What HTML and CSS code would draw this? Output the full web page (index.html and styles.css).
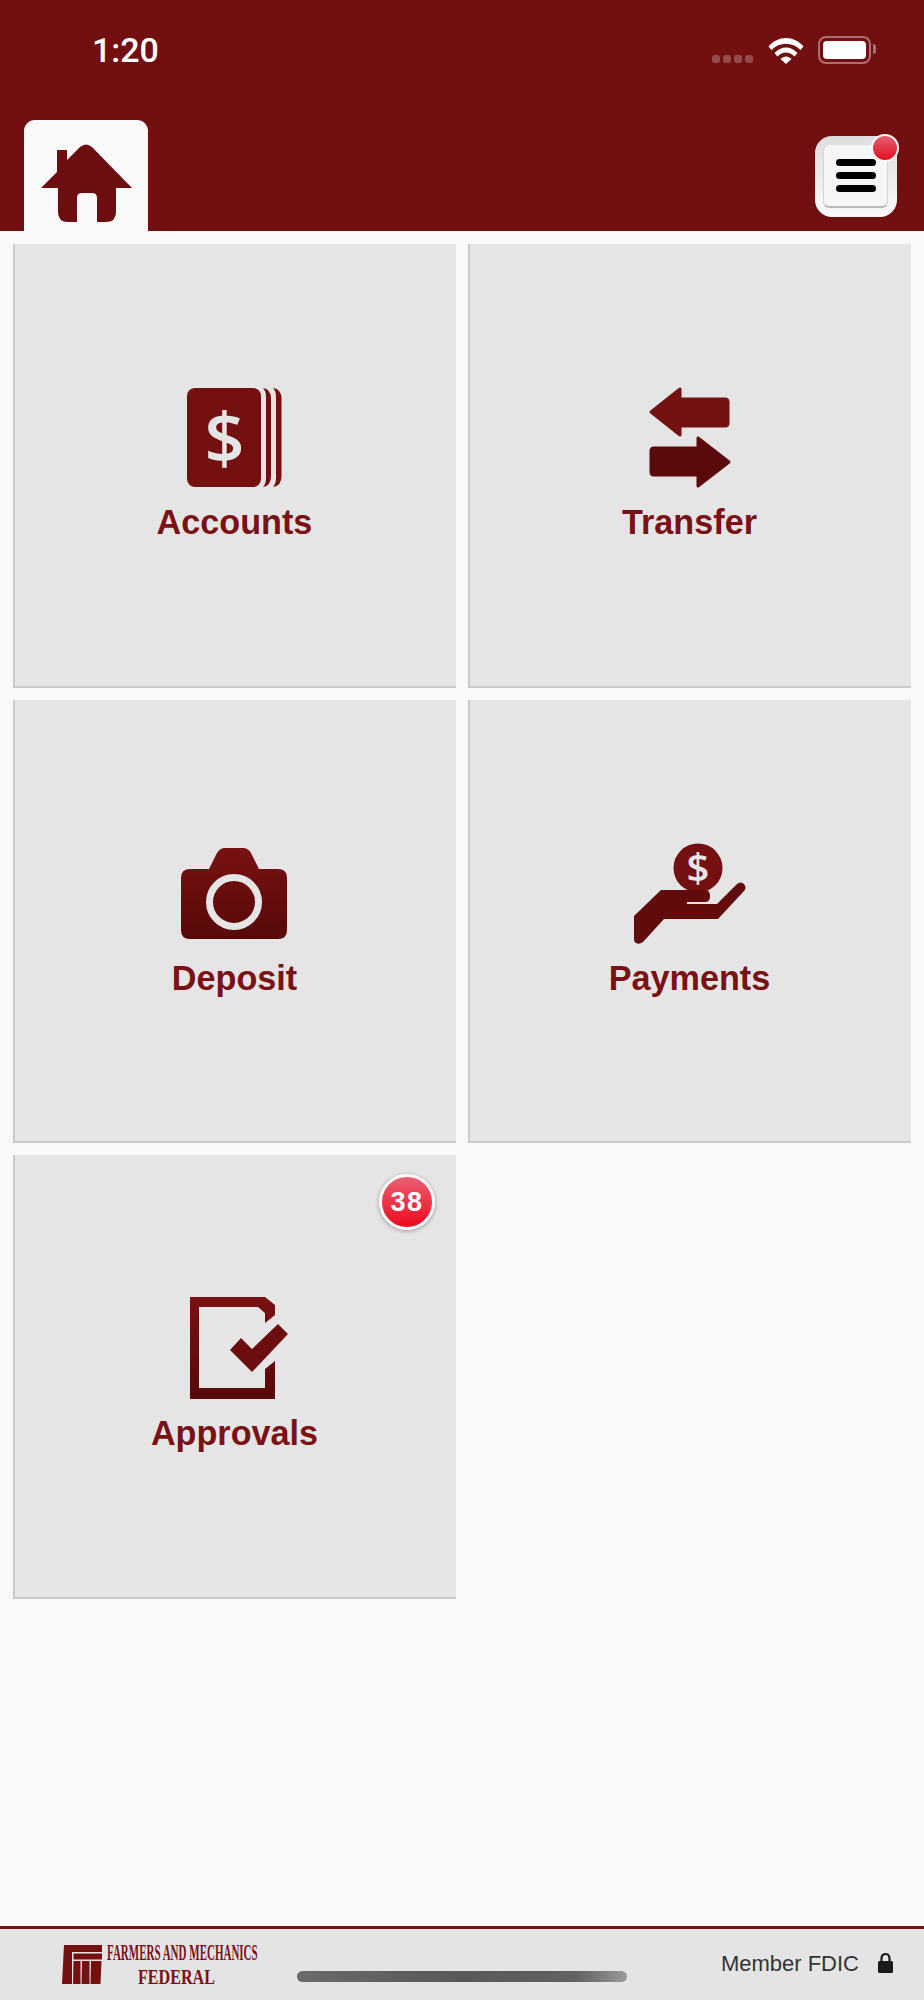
FILE: index.html
```html
<!DOCTYPE html>
<html lang="en">
<head>
    <meta charset="UTF-8">
    <meta name="viewport" content="width=device-width, initial-scale=1.0">
    <title>Farmers and Mechanics Federal</title>
    <link rel="stylesheet" href="styles.css">
</head>
<body>
    <div class="app">
        <header class="top">
            <div class="status">
                <span class="time">1:20</span>
                <div class="status-icons">
                    <div class="signal"><i></i><i></i><i></i><i></i></div>
                    <svg class="wifi" width="36" height="27" viewBox="0 0 36 27">
                        <path d="M0.500 9.500C10 -2 26 -2 35.500 9.500L32.500 13C24.500 4.500 11.500 4.500 3.500 13Z" fill="#fff"/>
                        <path d="M6.500 16C13 8.500 23 8.500 29.500 16L26.500 19.500C21.500 14 14.500 14 9.500 19.500Z" fill="#fff"/>
                        <path d="M12.500 22C16 18.500 20 18.500 23.500 22L18 27Z" fill="#fff"/>
                    </svg>
                    <div class="battery"><div class="battery-level"></div></div>
                </div>
            </div>
            <div class="toolbar">
                <div class="home-tab">
                    <svg width="124" height="111" viewBox="0 0 124 111">
                        <defs>
                            <linearGradient id="iconFill" x1="0" y1="0" x2="0" y2="1">
                                <stop offset="0" stop-color="#781112"/>
                                <stop offset="1" stop-color="#570909"/>
                            </linearGradient>
                        </defs>
                        <path d="M17 68L33 52V30H43V40L56 27Q62 22 68 27L108 68H92V92Q92 102 82 102H73V78Q73 73 68 73H58Q53 73 53 78V102H44Q34 102 34 92V68Z" fill="#6c0e0f"/>
                    </svg>
                </div>
                <div class="menu-btn">
                    <div class="menu-panel"><i></i><i></i><i></i></div>
                    <span class="menu-dot"></span>
                </div>
            </div>
        </header>

        <main class="tiles">
            <div class="tile">
                <svg class="tile-icon" width="121" height="108" viewBox="0 0 121 108">
                    <rect x="13" y="4" width="74" height="99" rx="8" fill="#741010"/>
                    <path d="M89 4Q97 5 97 15V92Q97 102 89 103Q92 100 92 94V13Q92 7 89 4Z" fill="#741010"/>
                    <path d="M99 4Q107.500 5 107.500 15V92Q107.500 102 99 103Q102 100 102 94V13Q102 7 99 4Z" fill="#741010"/>
                    <text x="50.500" y="79" class="dollar dollar-lg">$</text>
                </svg>
                <span class="tile-label">Accounts</span>
            </div>
            <div class="tile">
                <svg class="tile-icon" width="121" height="108" viewBox="0 0 121 108">
                    <path d="M22 28L51 5V15H96Q99 15 99 18V39Q99 42 96 42H51V51Z" fill="#731011" stroke="#731011" stroke-width="3" stroke-linejoin="round"/>
                    <path d="M100 78L69 102V91H25Q22 91 22 88V67Q22 64 25 64H69V54Z" fill="#5b0a0b" stroke="#5b0a0b" stroke-width="3" stroke-linejoin="round"/>
                </svg>
                <span class="tile-label">Transfer</span>
            </div>
            <div class="tile">
                <svg class="tile-icon" width="121" height="108" viewBox="0 0 121 108">
                    <path d="M16 29H35L43 13Q46 8 51 8H69Q74 8 77 13L85 29H104Q113 29 113 38V90Q113 99 104 99H16Q7 99 7 90V38Q7 29 16 29Z" fill="url(#iconFill)"/>
                    <circle cx="60" cy="62" r="24.500" fill="none" stroke="#e5e5e5" stroke-width="7"/>
                </svg>
                <span class="tile-label">Deposit</span>
            </div>
            <div class="tile">
                <svg class="tile-icon" width="121" height="108" viewBox="0 0 121 108">
                    <circle cx="69" cy="28" r="24.500" fill="#741011"/>
                    <text x="69" y="42" class="dollar dollar-sm">$</text>
                    <path d="M5 76L32 50H76Q81 50 81 56Q81 62 76 62H58V64H88L108 44Q112 41 115 44Q118 48 115 51L89 79H35L14 102Q10 105 7 103Q5 102 5 99Z" fill="#620b0c"/>
                </svg>
                <span class="tile-label">Payments</span>
            </div>
            <div class="tile">
                <span class="badge">38</span>
                <svg class="tile-icon" width="121" height="108" viewBox="0 0 121 108">
                    <path d="M16 2H91L101 10V20L91 28V18L84 12H25V93H91V74L101 66V104H16Z" fill="url(#iconFill)"/>
                    <path d="M104 29L114 39L78 77L56 55L67 43L78 54Z" fill="#6c0e0f"/>
                </svg>
                <span class="tile-label">Approvals</span>
            </div>
        </main>

        <footer class="bottom">
            <div class="logo">
                <svg width="40" height="40" viewBox="0 0 40 40">
                    <path d="M2 1H40V8H10V40H0Z" fill="#741010"/>
                    <path d="M11.500 9.500H40V15.500H11.500Z" fill="#741010"/>
                    <path d="M11.500 17H18.500V40H11ZM20 17H27.500V40H19.500ZM29 17H39.500L38.500 40H28.500Z" fill="#741010"/>
                </svg>
                <div class="logo-text">
                    <span class="logo-top">FARMERS AND MECHANICS</span>
                    <span class="logo-federal">FEDERAL</span>
                </div>
            </div>
            <div class="member">
                <span>Member FDIC</span>
                <svg class="lock" width="15" height="21" viewBox="0 0 15 21">
                    <path d="M3.500 10V6.500C3.500 0.500 11.500 0.500 11.500 6.500V10" fill="none" stroke="#1a1a1a" stroke-width="2.200"/>
                    <rect x="0" y="9" width="15" height="12" rx="1.500" fill="#1a1a1a"/>
                </svg>
            </div>
            <div class="home-indicator"></div>
        </footer>
    </div>
</body>
</html>
```

FILE: styles.css
```css
body {
    margin: 0;
    background-color: #f9f9f9;
    font-family: "Liberation Sans", Arial, sans-serif;
}
.app {
    display: flex;
    flex-direction: column;
    height: 2000px;
}

/* top bar */
.top {
    height: 231px;
    background-color: #721011;
}
.status {
    display: flex;
    align-items: center;
    justify-content: space-between;
    height: 100px;
    padding: 0 48px 0 92px;
    color: white;
}
.time {
    font-family: Roboto, sans-serif;
    font-size: 34px;
    font-weight: 500;
}
.status-icons {
    display: flex;
    align-items: center;
}
.signal {
    display: flex;
    gap: 3px;
    margin-top: 18px;
    margin-right: 15px;
}
.signal i {
    width: 8px;
    height: 8px;
    border-radius: 3px;
    background-color: rgba(255, 255, 255, 0.25);
}
.wifi {
    margin-right: 14px;
}
.battery {
    position: relative;
    box-sizing: border-box;
    width: 53px;
    height: 28px;
    padding: 3px;
    border: 2px solid rgba(255, 255, 255, 0.4);
    border-radius: 8px;
    margin-right: 5px;
}
.battery::after {
    content: "";
    position: absolute;
    right: -7px;
    top: 6px;
    width: 3px;
    height: 10px;
    border-radius: 0 3px 3px 0;
    background-color: rgba(255, 255, 255, 0.4);
}
.battery-level {
    height: 100%;
    border-radius: 4px;
    background-color: white;
}
.toolbar {
    display: flex;
    align-items: flex-end;
    justify-content: space-between;
    height: 131px;
    padding: 0 27px 0 24px;
}
.home-tab {
    width: 124px;
    height: 111px;
    border-radius: 11px 11px 0 0;
    background-color: #f9f9f9;
}
.home-tab svg {
    display: block;
}
.menu-btn {
    position: relative;
    box-sizing: border-box;
    width: 82px;
    height: 81px;
    padding: 9px 9px 9px 8px;
    margin-bottom: 14px;
    border-radius: 17px;
    background-image: linear-gradient(to bottom, #dcdddc, #fafafa);
}
.menu-panel {
    box-sizing: border-box;
    display: flex;
    flex-direction: column;
    align-items: center;
    justify-content: center;
    gap: 6px;
    height: 100%;
    border: 1px solid #d4d4d4;
    border-bottom: 2px solid #b8b8b8;
    border-top: none;
    border-radius: 6px;
    background-color: #f6f6f6;
}
.menu-panel i {
    width: 40px;
    height: 7px;
    border-radius: 4px;
    background-color: black;
}
.menu-dot {
    position: absolute;
    left: 56px;
    top: -2px;
    box-sizing: border-box;
    width: 28px;
    height: 28px;
    border: 2px solid #f8f8f8;
    border-radius: 50%;
    background-image: linear-gradient(to bottom, #e45f70, #e20f1f);
}

/* tiles */
.tiles {
    flex: 1;
    display: grid;
    grid-template-columns: 443px 443px;
    grid-auto-rows: 443.5px;
    column-gap: 12px;
    row-gap: 12px;
    padding: 13px 13px 0;
}
.tile {
    position: relative;
    display: flex;
    flex-direction: column;
    align-items: center;
    padding-top: 140px;
    background-color: #e5e5e5;
    box-shadow: inset 2px -2px 0 #c9c9c9;
}
.tile-icon {
    display: block;
}
.tile-label {
    margin-top: 10px;
    font-size: 34.2px;
    line-height: 40px;
    font-weight: bold;
    color: #7a1114;
}
.dollar {
    font-family: "Open Sans", sans-serif;
    font-weight: 600;
    text-anchor: middle;
    fill: #e5e5e5;
}
.dollar-lg {
    font-size: 70px;
}
.dollar-sm {
    font-size: 40px;
}
.badge {
    position: absolute;
    right: 21px;
    top: 19px;
    box-sizing: border-box;
    width: 56px;
    height: 56px;
    border: 3px solid #f8f8f8;
    border-radius: 50%;
    background-image: linear-gradient(to bottom, #ec6074, #ee0a1e);
    box-shadow: 0 1px 4px rgba(0, 0, 0, 0.35);
    color: white;
    font-size: 27px;
    font-weight: bold;
    letter-spacing: 1.5px;
    line-height: 50px;
    text-align: center;
}

/* footer */
.bottom {
    position: relative;
    display: flex;
    align-items: center;
    justify-content: space-between;
    height: 71px;
    padding: 0 31px 0 62px;
    border-top: 3px solid #7a1015;
    background-color: #e4e4e4;
}
.logo {
    display: flex;
    align-items: center;
    gap: 5px;
    margin-bottom: 2px;
}
.logo svg {
    display: block;
}
.logo-text {
    width: 152px;
    margin-top: 4px;
    font-family: "Liberation Serif", serif;
    font-weight: bold;
    color: #7a1015;
    white-space: nowrap;
}
.logo-top,
.logo-federal {
    display: block;
    width: max-content;
    transform-origin: left center;
}
.logo-top {
    font-size: 23px;
    line-height: 24px;
    transform: scaleX(0.478);
}
.logo-federal {
    margin-left: 31px;
    font-size: 20.5px;
    line-height: 25px;
    transform: scaleX(0.786);
}
.member {
    display: flex;
    align-items: center;
    gap: 19px;
    padding-bottom: 2px;
    font-size: 22px;
    color: #333;
}
.lock {
    margin-bottom: 2px;
}
.home-indicator {
    position: absolute;
    left: 297px;
    bottom: 18px;
    width: 330px;
    height: 11px;
    border-radius: 6px;
    background-image: linear-gradient(to right, #6a6a6a, #585858 50%, #626262 85%, #9a9a9a);
}
```
